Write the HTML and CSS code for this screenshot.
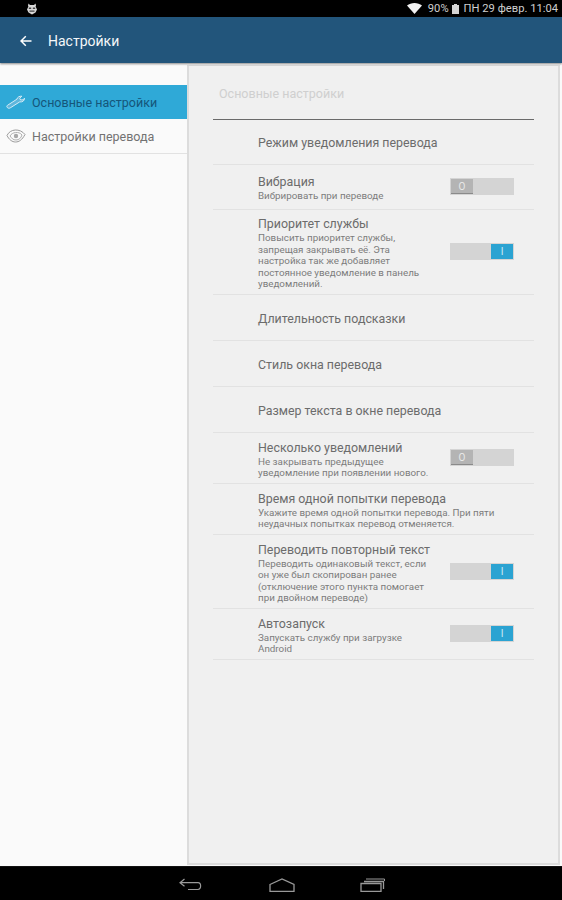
FILE: index.html
```html
<!DOCTYPE html>
<html lang="ru">
<head>
<meta charset="utf-8">
<title>Настройки</title>
<link rel="stylesheet" href="styles.css">
</head>
<body>
<div class="screen">
  <header class="status">
    <svg class="bug" viewBox="0 0 12 13" width="12" height="13"><path d="M2.500 1.500L4 3h4l1.500-1.500.5 2-.4 1L11 7.500 9.500 10.500 6 12.500 2.500 10.500 1 7.500l1.400-3-.4-1z" fill="#d8d8d8"/><path d="M2.800 5.400h2.400v1.600H2.800zM6.800 5.400h2.400v1.600H6.800zM3.500 8.600h5v1.200h-5z" fill="#444"/></svg>
    <div class="status-right">
      <svg class="wifi" viewBox="0 0 15 11" width="15" height="11"><path d="M0 2.600C4-.8 11-.8 15 2.600L7.500 11z" fill="#f2f2f2"/></svg>
      <span>90%</span>
      <svg class="batt" viewBox="0 0 7 10" width="7" height="10"><path d="M2 0h3v1h2v9H0V1h2z" fill="#d4d4d4"/></svg>
      <span>ПН 29 февр. 11:04</span>
    </div>
  </header>
  <header class="appbar">
    <svg class="back" viewBox="0 0 12 12" width="12" height="12"><path d="M11.500 6H1.200M5.800 1.200L1 6l4.800 4.800" fill="none" stroke="#fff" stroke-width="1.500"/></svg>
    <h1 class="appbar-title">Настройки</h1>
  </header>
  <main class="content">
    <nav class="sidebar">
      <a class="side-item side-item-active">
        <svg class="side-icon" viewBox="0 0 20 14" width="20" height="14"><path d="M1.400 12.600c-.9-.8-.7-1.700.1-2.300l9.400-6.100c.3-1.900 2.500-3.300 5-3l-2.200 2 .9 1.800 2.600-.2 1.300-1.600c.3 2.200-2 4.200-4.800 3.700l-9.500 6c-.9.5-1.900.5-2.800-.3z" fill="#5fb6dc" stroke="#d5ebf5" stroke-width="1"/></svg>
        <span>Основные настройки</span>
      </a>
      <a class="side-item side-item-plain">
        <svg class="side-icon" viewBox="0 0 20 14" width="20" height="14"><path d="M1 6.500C4-.3 14-1 19 5.500 16 11 13 13 9.500 13 6 13 3 10.500 1 6.500z" fill="none" stroke="#9a9a9a" stroke-width="1"/><path d="M4 7c2-4 9-5 12-1-1 3-3 5-6 5S6 9.500 4 7z" fill="none" stroke="#b0b0b0" stroke-width="1"/><circle cx="10" cy="7" r="2.200" fill="#a8a8a8"/></svg>
        <span>Настройки перевода</span>
      </a>
    </nav>
    <section class="panel">
      <h2 class="panel-title">Основные настройки</h2>
      <div class="rows">
        <div class="row row-h44"><div class="row-title">Режим уведомления перевода</div></div>
        <div class="row row-h44">
          <div class="row-text"><div class="row-title">Вибрация</div><div class="row-sub">Вибрировать при переводе</div></div>
          <div class="toggle"><span class="knob knob-off">O</span></div>
        </div>
        <div class="row row-h84">
          <div class="row-text"><div class="row-title">Приоритет службы</div><div class="row-sub">Повысить приоритет службы, запрещая закрывать её. Эта настройка так же добавляет постоянное уведомление в панель уведомлений.</div></div>
          <div class="toggle toggle-on"><span class="knob knob-on">I</span></div>
        </div>
        <div class="row row-h45 row-center"><div class="row-title">Длительность подсказки</div></div>
        <div class="row row-h45 row-center"><div class="row-title">Стиль окна перевода</div></div>
        <div class="row row-h45 row-center"><div class="row-title">Размер текста в окне перевода</div></div>
        <div class="row row-h50">
          <div class="row-text"><div class="row-title">Несколько уведомлений</div><div class="row-sub">Не закрывать предыдущее уведомление при появлении нового.</div></div>
          <div class="toggle"><span class="knob knob-off">O</span></div>
        </div>
        <div class="row row-h50">
          <div class="row-text row-text-wide"><div class="row-title">Время одной попытки перевода</div><div class="row-sub">Укажите время одной попытки перевода. При пяти неудачных попытках перевод отменяется.</div></div>
        </div>
        <div class="row row-h73">
          <div class="row-text"><div class="row-title">Переводить повторный текст</div><div class="row-sub">Переводить одинаковый текст, если он уже был скопирован ранее (отключение этого пункта помогает при двойном переводе)</div></div>
          <div class="toggle toggle-on"><span class="knob knob-on">I</span></div>
        </div>
        <div class="row row-h50">
          <div class="row-text"><div class="row-title">Автозапуск</div><div class="row-sub">Запускать службу при загрузке Android</div></div>
          <div class="toggle toggle-on"><span class="knob knob-on">I</span></div>
        </div>
      </div>
    </section>
  </main>
  <footer class="navbar">
    <svg viewBox="0 0 24 13" width="24" height="13"><path d="M5.500 1L1 4.700l4.500 3.600M1 4.700h18c3.500 0 3.500 6.800 0 6.800H9" fill="none" stroke="#999" stroke-width="1.200"/></svg>
    <svg viewBox="0 0 26 14" width="26" height="14"><path d="M1 6.500L13 1l12 5.500v6.800H1z" fill="none" stroke="#999" stroke-width="1.300"/></svg>
    <svg viewBox="0 0 25 14" width="25" height="14"><path d="M1 5.500h20v7.800H1zM4 3.500h19.500V11" fill="none" stroke="#999" stroke-width="1.300"/><path d="M6 1h18.500v2" fill="none" stroke="#999" stroke-width="1"/></svg>
  </footer>
</div>
</body>
</html>
```
FILE: styles.css
```css
* { box-sizing: border-box; }
html, body { margin: 0; padding: 0; }
body { font-family: Roboto, "Liberation Sans", sans-serif; background: #000; }
.screen { width: 562px; height: 900px; display: flex; flex-direction: column; overflow: hidden; }

.status { height: 17px; background: #000; display: flex; align-items: center; justify-content: space-between; padding: 0 0 0 26px; flex: none; }
.bug { display: block; }
.status-right { display: flex; align-items: center; gap: 3px; padding-right: 4px; color: #cfcfcf; font-size: 11.2px; line-height: 17px; }
.wifi { margin-right: 3px; }
.batt { margin-right: 2px; }

.appbar { height: 46px; background: #22557b; display: flex; align-items: center; padding: 2px 0 0 20px; flex: none; position: relative; box-shadow: 0 1px 2px rgba(0,0,0,.45); z-index: 1; }
.back { margin-right: 16px; }
.appbar-title { margin: 0; font-size: 14px; font-weight: 400; color: #f4f7f9; }

.content { flex: none; height: 803px; background: #fafafa; display: flex; }
.sidebar { width: 187px; flex: none; padding-top: 22px; background: #fafafa; }
.side-item { display: flex; align-items: center; gap: 6px; padding-left: 6px; font-size: 12.5px; }
.side-item-active { height: 34px; background: #2fa9d7; color: #15567a; }
.side-item-plain { height: 35px; border-bottom: 1px solid #e2e2e2; color: #727272; }
.side-icon { flex: none; }

.panel { width: 373px; height: 800px; margin: 2px 0 0 0; background: #f0f0f0; border: 1px solid #dcdcdc; border-width: 1px 2px 2px 2px; padding: 0 24px; }
.panel-title { margin: 0; height: 54px; padding-top: 20px; font-size: 12.5px; line-height: 16px; font-weight: 400; color: #cfcfcf; border-bottom: 1px solid #6a6a6a; padding-left: 6px; }

.row { display: flex; align-items: center; justify-content: space-between; padding: 0 20px 0 45px; border-bottom: 1px solid #e2e2e2; }
.row-h44 { height: 45px; }
.row-h84 { height: 85px; }
.row-h45 { height: 46px; }
.row-h50 { height: 51px; }
.row-h73 { height: 74px; }
.row-center { padding-top: 1px; }
.row-text { width: 180px; padding-top: 2px; }
.row-text-wide { width: 250px; }
.row-title { font-size: 12.4px; line-height: 15px; color: #6c6c6c; white-space: nowrap; }
.row-sub { margin-top: 1px; font-size: 9.8px; line-height: 11.4px; color: #7c7c7c; }

.toggle { width: 64px; height: 17px; margin-top: -1px; background: #d4d4d4; display: flex; padding: 1px; flex: none; }
.toggle-on { justify-content: flex-end; }
.knob { width: 22px; height: 15px; font-size: 10px; line-height: 15px; text-align: center; color: #e8e8e8; }
.knob-off { background: #b4b4b4; border-bottom: 1px solid #8a8a8a; }
.knob-on { background: #2ba3d2; color: #cfeaf5; }

.navbar { flex: 1; background: #000; border-top: 1px solid #111; display: flex; align-items: center; padding: 2px 177px 0 179px; justify-content: space-between; }
```
